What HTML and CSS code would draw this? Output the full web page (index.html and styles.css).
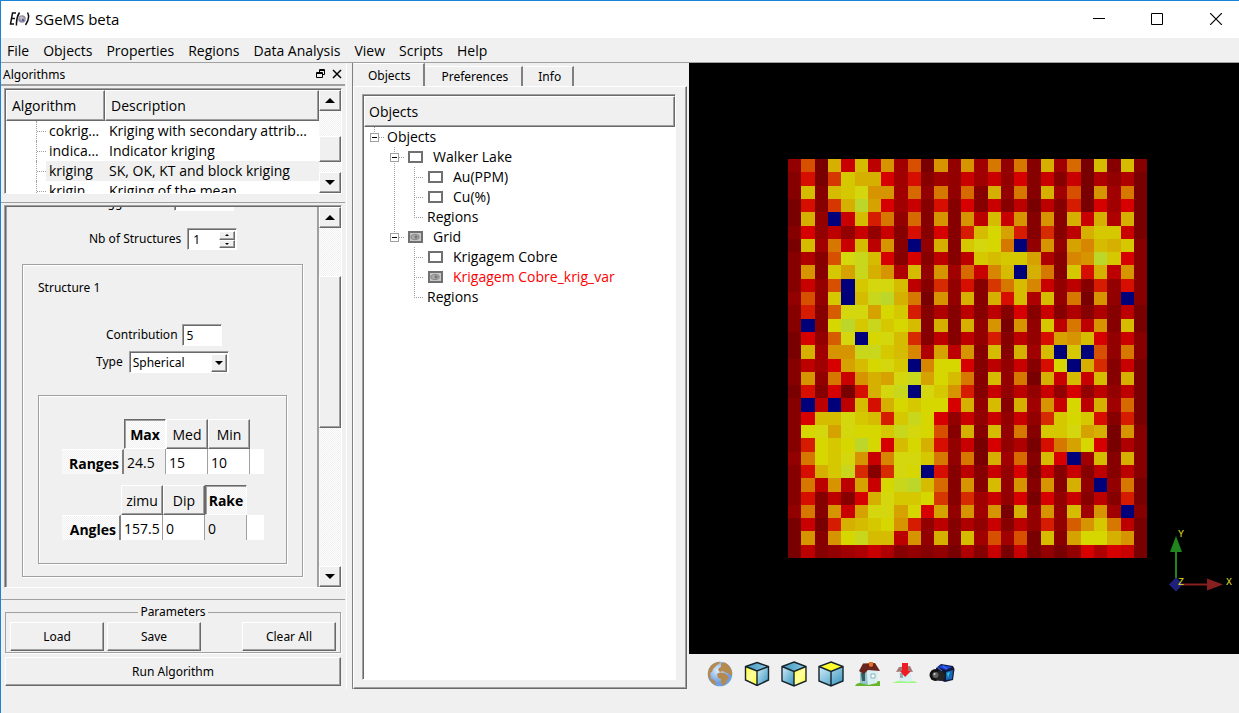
FILE: index.html
```html
<!DOCTYPE html>
<html lang="en">
<head>
<meta charset="utf-8">
<title>SGeMS beta</title>
<link rel="stylesheet" href="styles.css">
</head>
<body>
<div class="window">
  <header class="titlebar">
    <svg class="logo" width="22" height="16" viewBox="0 0 22 16">
      <path d="M7 2H3.500L1.500 13H5M2.500 7.500H6M10.500 1.500Q7 7 7.500 14.500M18.500 1.500Q21.500 7 16.500 14" fill="none" stroke="#111" stroke-width="1.500"/>
      <circle cx="13" cy="8" r="3.800" fill="#8d8ba8"/><path d="M10 7q2-3 4-1t2 3q-3 2-4 0z" fill="#c9b8b0"/><circle cx="14" cy="9" r="1.300" fill="#53639b"/>
    </svg>
    <h1 class="title">SGeMS beta</h1>
    <div class="winbtns">
      <button class="winbtn" aria-label="Minimize"><svg width="12" height="12"><path d="M0 5.500H12" stroke="#000"/></svg></button>
      <button class="winbtn" aria-label="Maximize"><svg width="12" height="12"><path d="M.5.5h11v11H.5z" fill="none" stroke="#000"/></svg></button>
      <button class="winbtn" aria-label="Close"><svg width="12" height="12"><path d="M0 0L12 12M12 0L0 12" stroke="#000" stroke-width="1.200"/></svg></button>
    </div>
  </header>
  <nav class="menubar">
    <button>File</button><button>Objects</button><button>Properties</button><button>Regions</button><button>Data Analysis</button><button>View</button><button>Scripts</button><button>Help</button>
  </nav>

  <main class="main">
    <section class="dock">
      <div class="dock-title">
        <h2>Algorithms</h2>
        <button class="tiny" aria-label="Float"><svg width="10" height="10"><path d="M3.500 3V.5h5v5H7M3 1.500h6M.5 3.500h6v5h-6zM.5 4.500h6" fill="none" stroke="#000"/></svg></button>
        <button class="tiny" aria-label="Close panel"><svg width="10" height="10"><path d="M1 1L9 9M9 1L1 9" stroke="#000" stroke-width="1.500"/></svg></button>
      </div>

      <div class="sunken algos">
        <div class="algo-view">
          <table class="algo-table">
            <thead><tr><th class="c1">Algorithm</th><th>Description</th></tr></thead>
            <tbody>
              <tr><td class="branch"><span>cokriging</span></td><td>Kriging with secondary attributes</td></tr>
              <tr><td class="branch"><span>indicator</span></td><td>Indicator kriging</td></tr>
              <tr class="sel"><td class="branch"><span>kriging</span></td><td>SK, OK, KT and block kriging</td></tr>
              <tr><td class="branch"><span>krigin</span></td><td>Kriging of the mean</td></tr>
            </tbody>
          </table>
        </div>
        <div class="scroll">
          <button class="bevel sbtn" aria-label="Scroll up"><i class="up"></i></button>
          <div class="bevel thumb thumb-a"></div>
          <button class="bevel sbtn" aria-label="Scroll down"><i class="down"></i></button>
        </div>
      </div>

      <div class="sunken params">
        <div class="param-view">
          <div class="peek"><label for="nug">Nugget Effect</label><input id="nug" class="field wide" value=""></div>
          <div class="row nb"><label for="nb">Nb of Structures</label>
            <span class="spin"><input id="nb" value="1"><span class="arrows"><button class="bevel" aria-label="Increase"><i class="up"></i></button><button class="bevel" aria-label="Decrease"><i class="down"></i></button></span></span>
          </div>
          <div class="etched structure">
            <h3>Structure 1</h3>
            <div class="row contrib"><label for="con">Contribution</label><input id="con" class="field" value="5"></div>
            <div class="row type"><label for="typ">Type</label>
              <span class="combo"><select id="typ"><option>Spherical</option></select><span class="bevel combo-arrow"><i class="down"></i></span></span></div>
            <div class="etched aniso">
              <table class="cells ranges">
                <colgroup><col class="rh"><col class="cc"><col class="cc"><col class="cc"><col></colgroup>
                <thead><tr><td></td><th class="on">Max</th><th>Med</th><th>Min</th><td></td></tr></thead>
                <tbody><tr><th class="side">Ranges</th><td class="gray"><input aria-label="Max range" value="24.5"></td><td><input aria-label="Med range" value="15"></td><td><input aria-label="Min range" value="10"></td><td></td></tr></tbody>
              </table>
              <table class="cells angles">
                <colgroup><col class="rh"><col class="cc"><col class="cc"><col class="cc"><col></colgroup>
                <thead><tr><td></td><th title="Azimuth">zimu</th><th>Dip</th><th class="on">Rake</th><td></td></tr></thead>
                <tbody><tr><th class="side">Angles</th><td><input aria-label="Azimuth" value="157.5"></td><td><input aria-label="Dip" value="0"></td><td class="gray"><input aria-label="Rake" value="0"></td><td></td></tr></tbody>
              </table>
            </div>
          </div>
        </div>
        <div class="scroll">
          <button class="bevel sbtn" aria-label="Scroll up"><i class="up"></i></button>
          <div class="bevel thumb thumb-b"></div>
          <button class="bevel sbtn" aria-label="Scroll down"><i class="down"></i></button>
        </div>
      </div>

      <div class="actions">
        <fieldset class="group"><legend>Parameters</legend>
          <div class="btnrow"><button class="bevel btn">Load</button><button class="bevel btn">Save</button><button class="bevel btn clear">Clear All</button></div>
        </fieldset>
        <button class="bevel btn run">Run Algorithm</button>
      </div>
    </section>

    <section class="objects">
      <div class="tabs" role="tablist"><button class="tab active" role="tab">Objects</button><button class="tab" role="tab">Preferences</button><button class="tab" role="tab">Info</button></div>
      <div class="page">
        <div class="sunken treebox">
          <div class="tree-head">Objects</div>
          <ul class="tree">
            <li class="root"><div class="node"><button class="exp" aria-label="Collapse Objects"></button><span class="stub"></span><span class="name">Objects</span></div>
              <ul>
                <li><div class="node"><button class="exp" aria-label="Collapse Walker Lake"></button><span class="stub"></span><input type="checkbox" id="wl"><label for="wl">Walker Lake</label></div>
                  <ul>
                    <li class="leaf"><div class="node"><input type="checkbox" id="au"><label for="au">Au(PPM)</label></div></li>
                    <li class="leaf"><div class="node"><input type="checkbox" id="cu"><label for="cu">Cu(%)</label></div></li>
                    <li class="leaf end"><div class="node"><span>Regions</span></div></li>
                  </ul></li>
                <li class="end"><div class="node"><button class="exp" aria-label="Collapse Grid"></button><span class="stub"></span><input type="checkbox" id="gr" checked><label for="gr">Grid</label></div>
                  <ul>
                    <li class="leaf"><div class="node"><input type="checkbox" id="kc"><label for="kc">Krigagem Cobre</label></div></li>
                    <li class="leaf"><div class="node"><input type="checkbox" id="kv" checked><label for="kv" class="red">Krigagem Cobre_krig_var</label></div></li>
                    <li class="leaf end"><div class="node"><span>Regions</span></div></li>
                  </ul></li>
              </ul></li>
          </ul>
        </div>
      </div>
    </section>

    <section class="view">
      <svg class="scene" viewBox="0 0 550 591" preserveAspectRatio="xMidYMid meet">
        <g id="cells" shape-rendering="crispEdges"></g>
        <path d="M487 520V488" stroke="#1f861f" stroke-width="2"/><path d="M487 473L493 489H481z" fill="#1f861f"/>
        <path d="M490 521.500H520" stroke="#862020" stroke-width="2"/><path d="M518 515.500L534 521.500L518 527.500z" fill="#862020"/>
        <path d="M487 514.500L494 521.500L487 528.500L480 521.500z" fill="#20207c"/>
        <text class="axis" x="489" y="474">Y</text><text class="axis" x="537" y="522">X</text><text class="axis" x="489" y="522">Z</text>
      </svg>
      <div class="toolbar">
        <button aria-label="Reset view"><svg width="26" height="26" viewBox="0 0 26 26">
          <defs><radialGradient id="sea" cx=".4" cy=".35"><stop offset="0" stop-color="#dcecff"/><stop offset="1" stop-color="#6f9fe0"/></radialGradient></defs>
          <circle cx="13" cy="13" r="12.300" fill="url(#sea)"/>
          <path d="M4 4.500Q8 .7 13 .7L12 3L10 4L8 6L6 8L5 11L3 12L4 16L2 18Q-1 10 4 4.500zM14 2L18 1.500Q24 5 25.300 12L24 15L21 12L18 11.500L16 10L13 11L11 9L12 7L14 6zM10 13L13 11.500L17 12L20 14L22 17L20 19L19 22L16 24.500L14 22L14 18L11 17zM2 17L5 18L8 20L9 24.600Q3.500 22 2 17z" fill="#b48a4e"/></svg></button>
        <button aria-label="View along X"><svg width="26" height="26" viewBox="0 0 26 26"><path d="M13 1.500L24.500 5.500L13 10L1.500 5.500z" fill="url(#bt)"/><path d="M1.500 5.500L13 10V24.500L1.500 19z" fill="url(#ye)"/><path d="M24.500 5.500L13 10V24.500L24.500 19z" fill="url(#bl)"/><path class="cube" d="M13 1.500L24.500 5.500V19L13 24.500L1.500 19V5.500zM1.500 5.500L13 10L24.500 5.500M13 10V24.500"/>
          <defs><linearGradient id="bt"><stop offset="0" stop-color="#3d94bd"/><stop offset="1" stop-color="#8cc9e2"/></linearGradient><linearGradient id="bl" x2="1" y2="1"><stop offset="0" stop-color="#d4edf7"/><stop offset="1" stop-color="#3293bf"/></linearGradient><linearGradient id="ye" x2="1" y2="1"><stop offset="0" stop-color="#ffff30"/><stop offset=".5" stop-color="#ffffa0"/><stop offset="1" stop-color="#ffff20"/></linearGradient></defs></svg></button>
        <button aria-label="View along Y"><svg width="26" height="26" viewBox="0 0 26 26"><path d="M13 1L25 5.500L13 10.500L1 5.500z" fill="url(#bt)"/><path d="M1 5.500L13 10.500V25L1 20z" fill="url(#bl)"/><path d="M25 5.500L13 10.500V25L25 20z" fill="url(#ye)"/><path class="cube" d="M13 1L25 5.500V20L13 25L1 20V5.500zM1 5.500L13 10.500L25 5.500M13 10.500V25"/></svg></button>
        <button aria-label="View along Z"><svg width="26" height="26" viewBox="0 0 26 26"><path d="M13 1L25 5.500L13 10.500L1 5.500z" fill="#ffff30"/><path d="M1 5.500L13 10.500V25L1 20zM25 5.500L13 10.500V25L25 20z" fill="url(#bl)"/><path class="cube" d="M13 1L25 5.500V20L13 25L1 20V5.500zM1 5.500L13 10.500L25 5.500M13 10.500V25"/></svg></button>
        <button aria-label="Home view"><svg width="26" height="26" viewBox="0 0 26 26"><path d="M0 25Q2 21 9 22L25 20V25z" fill="#68b52c"/><path d="M5 9L12 10L13 24L5 22z" fill="#91c4cb"/><path d="M12 10L19 5L23 11L22 22L13 24z" fill="#d7eef2"/><path d="M6 12h4v8H7z" fill="#345b62"/><path d="M16 13h4v4h-4z" fill="#fff" stroke="#85b4bd"/><path d="M8 2.500L20 2L25 10L13 9L9 13L4 10z" fill="#69241d"/><path d="M14 1h4v4l-2 1-2-1z" fill="#e56f25"/></svg></button>
        <button aria-label="Save view"><svg width="26" height="26" viewBox="0 0 26 26"><path d="M0 22Q10 17 25 21L24 22z" fill="#9dfa81"/><path d="M6 10L18 9L20 18L18 21L7 20z" fill="#d9eef1"/><path d="M8 12h3v5H8z" fill="#91acb0"/><path d="M7 6L18 5L21 11L13 10L4 11z" fill="#a37775"/><path d="M10 2h6v8h3L13 16L8 10h2z" fill="#ed1c24"/></svg></button>
        <button aria-label="Snapshot"><svg width="26" height="26" viewBox="0 0 26 26"><path d="M7 7L12 3L24 5L25.500 8L24 19L16 21L8 18z" fill="#11183a"/><path d="M9 6L13 4L23 6L17 9z" fill="#1d46db"/><path d="M17 11L24 9L23 18L17 19z" fill="#1769b8"/><path d="M18 12L21 11L19 17z" fill="#31c6cf"/><path d="M8 6L13 10M14 5L18 8" stroke="#4a7dff"/><circle cx="6.500" cy="14" r="6" fill="#121212"/><circle cx="11" cy="15" r="5" fill="#252525"/><circle cx="6.500" cy="14" r="3" fill="#626262"/><circle cx="5.500" cy="13" r="1" fill="#d0d0d0"/></svg></button>
      </div>
    </section>
  </main>
</div>
<script src="grid.js"></script>
</body>
</html>
```
FILE: styles.css
```css
* { box-sizing: border-box; }
body { margin: 0; background: #f0f0f0; color: #000; font: 12px/16px "Noto Sans", "Open Sans", sans-serif; }
button, input, select { font: inherit; color: inherit; margin: 0; padding: 0; border: 0; border-radius: 0; background: none; }
h1, h2, h3 { margin: 0; font-size: inherit; font-weight: normal; }
svg { display: block; }
ul { list-style: none; margin: 0; padding: 0; }

.window { display: flex; flex-direction: column; min-height: 100vh; border-top: 1px solid #1883d7; border-left: 1px solid #1883d7; }
.titlebar { display: flex; align-items: center; height: 37px; background: #fff; padding: 0 0 2px 8px; }
.title { flex: 1; margin-left: 4px; font: 15px/20px "Open Sans", sans-serif; }
.winbtns { display: flex; }
.winbtn { width: 58px; height: 34px; display: flex; align-items: center; justify-content: center; }
.winbtn:last-child { width: 53px; padding-left: 7px; }
.menubar { display: flex; gap: 14px; height: 25px; padding-left: 6px; border-bottom: 1px solid #a0a0a0; font: 14px/26px "Open Sans", sans-serif; }
.menubar button { white-space: nowrap; }

.main { flex: 1; display: flex; min-height: 0; }
.dock { flex: 0 0 346px; display: flex; flex-direction: column; margin-bottom: 24px; border-right: 1px solid #fff; }
.dock-title { display: flex; align-items: center; height: 23px; padding: 2px 0 0 2px; margin-right: 1px; border-bottom: 2px solid #a0a0a0; }
.dock-title h2 { flex: 1; }
.tiny { width: 16px; height: 16px; padding: 2px 3px 4px; }

.sunken { border: 1px solid; border-color: #a0a0a0 #fff #fff #a0a0a0; box-shadow: inset 1px 1px #696969; padding: 1px 0 0 1px; }
.bevel { background: #f0f0f0; border: 1px solid; border-color: #fff #696969 #696969 #fff; box-shadow: inset -1px -1px #a0a0a0; }
.etched { border: 1px solid #a0a0a0; box-shadow: 1px 1px #fff, inset 1px 1px #fff; }
.up, .down { display: block; border: 5px solid transparent; border-top-width: 0; border-bottom: 5px solid #000; }
.down { transform: rotate(180deg); }

.algos { display: flex; height: 106px; margin: 2px 4px 0 3px; background: #fff; }
.algo-view { flex: 1; min-width: 0; height: 103px; overflow: hidden; }
.algo-table { width: 100%; table-layout: fixed; border-collapse: separate; border-spacing: 0; font: 14px/20px "Open Sans", sans-serif; }
.algo-table th { height: 31px; padding: 0 5px; text-align: left; font-weight: normal; background: #f0f0f0; border: 1px solid; border-color: #fff #696969 #696969 #fff; box-shadow: inset -1px -1px #a0a0a0; }
.algo-table .c1 { width: 99px; }
.algo-table td { height: 20px; padding: 0 8px 0 4px; white-space: nowrap; overflow: hidden; text-overflow: ellipsis; }
.algo-table .branch { padding: 0 0 0 30px; background: linear-gradient(#fff, #fff) 0 0 / 40px 100% no-repeat; }
.branch span { display: block; padding: 0 5px 0 12px; overflow: hidden; text-overflow: ellipsis; border-left: 1px dotted #a0a0a0; background: repeating-linear-gradient(90deg, #a0a0a0 0 1px, transparent 1px 2px) 0 10px / 10px 1px no-repeat; }
.algo-table .sel td { background-color: #f0f0f0; }

.scroll { flex: 0 0 22px; display: flex; flex-direction: column; justify-content: space-between; background: repeating-conic-gradient(#fff 0 25%, #f0f0f0 0 50%) 0 0 / 2px 2px; }
.sbtn { height: 21px; display: flex; align-items: center; justify-content: center; flex-shrink: 0; }
.thumb-a { height: 26px; margin-top: 15px; }
.thumb-b { height: 152px; margin-bottom: 91px; }

.params { position: relative; flex: 1; display: flex; min-height: 383px; margin: 11px 4px 11px 3px; }
.params::before { content: ""; position: absolute; inset: -4px -4px auto -4px; border-top: 1px solid #a0a0a0; }
.param-view { flex: 1; min-width: 0; overflow: hidden; border: solid #a0a0a0; border-width: 0 2px 0 1px; padding: 0 14px 0 15px; }
.peek, .row { display: flex; align-items: center; gap: 6px; }
.peek { height: 4px; overflow: hidden; align-items: flex-end; padding-left: 69px; }
.peek label { line-height: 16px; white-space: nowrap; }
.field { width: 40px; height: 22px; padding-left: 4px; background: #fff; border: 1px solid; border-color: #a0a0a0 #fff #fff #a0a0a0; box-shadow: inset 1px 1px #696969; }
.wide { width: 60px; }
.nb { margin-top: 17px; padding-left: 67px; }
.nb label, .contrib label, .type label { white-space: nowrap; }
.spin, .combo { display: flex; position: relative; background: #fff; border: 1px solid; border-color: #a0a0a0 #fff #fff #a0a0a0; box-shadow: inset 1px 1px #696969; height: 22px; padding: 2px 1px 1px 2px; }
.spin input { width: 29px; padding-left: 3px; }
.arrows { display: flex; flex-direction: column; }
.arrows button { width: 16px; height: 9px; display: flex; align-items: center; justify-content: center; }
.arrows i { border-left-width: 2px; border-right-width: 2px; border-bottom-width: 2px; }
.structure { margin-top: 14px; padding: 15px; height: 313px; }
.contrib { margin-top: 28px; padding-left: 68px; gap: 4px; }
.type { margin-top: 5px; padding-left: 58px; }
.combo { width: 100px; }
.combo select { width: 100%; appearance: none; padding-left: 1px; }
.combo-arrow { position: absolute; right: 1px; top: 2px; width: 16px; height: 18px; display: flex; align-items: center; justify-content: center; pointer-events: none; }
.combo-arrow i { border-left-width: 4px; border-right-width: 4px; border-bottom-width: 4px; }
.aniso { margin-top: 22px; height: 169px; padding: 23px 22px 0 23px; }

.cells { width: 100%; table-layout: fixed; border-collapse: separate; border-spacing: 0; font: 14px/20px "Open Sans", sans-serif; }
.cells .cc { width: 42px; }
.ranges .rh { width: 62px; }
.angles .rh { width: 59px; }
.angles { margin-top: 11px; }
.cells th, .cells td { padding: 0; height: 25px; }
.cells thead th { height: 30px; padding-top: 1px; font-weight: normal; border: 1px solid; border-color: #fff #696969 #696969 #fff; box-shadow: inset -1px -1px #a0a0a0; }
.cells thead .on { font-weight: bold; border-color: #696969 #fff #fff #696969; box-shadow: inset 1px 1px #a0a0a0; background: repeating-conic-gradient(#fff 0 25%, #f0f0f0 0 50%) 0 0 / 2px 2px; }
.cells tbody td { background: #fff; border-right: 1px solid #a0a0a0; }
.cells tbody td:last-child { border: 0; }
.cells tbody .gray { background: #f0f0f0; }
.cells tbody .side { font-weight: bold; text-align: right; padding: 3px 3px 0 0; border-right: 2px solid #808080; border-top: 1px solid #fff; background: repeating-conic-gradient(#fff 0 25%, #f0f0f0 0 50%) 0 0 / 2px 2px; }
.cells input { display: block; width: 100%; padding: 2px 0 0 3px; }

.actions { border-top: 1px solid #a0a0a0; margin-right: 1px; padding: 4px 4px 3px 4px; }
.group { margin: 0; padding: 0 4px 1px 4px; border: 1px solid #a0a0a0; box-shadow: 1px 1px #fff; min-width: 0; }
.group legend { margin: 0 auto; padding: 0 2px; }
.btnrow { display: flex; gap: 3px; padding-top: 2px; }
.btn { height: 29px; }
.btnrow .btn { width: 94px; }
.btnrow .clear { margin-left: auto; }
.run { display: block; width: 100%; margin-top: 4px; }

.objects { flex: 0 0 335px; display: flex; flex-direction: column; margin: 0 2px 24px 5px; border-left: 1px solid #808080; }
.tabs { display: flex; align-items: flex-end; height: 23px; }
.tab { height: 20px; padding: 0 13px 0 16px; border-right: 2px solid #808080; border-top: 1px solid #fff; }
.tab.active { height: 23px; padding: 2px 13px 0 15px; }
.tab:last-child { padding: 0 11px 0 15px; }
.page { flex: 1; display: flex; border: 1px solid; border-color: #fff #696969 #696969 #fff; box-shadow: inset -1px -1px #a0a0a0; padding: 7px 10px 8px 8px; }
.treebox { flex: 1; min-width: 0; background: #fff; font: 14px/20px "Open Sans", sans-serif; }
.tree-head { height: 31px; padding: 5px 4px; background: #f0f0f0; border: 1px solid; border-color: #fff #696969 #696969 #fff; box-shadow: inset -1px -1px #a0a0a0; }
.tree { padding: 0 0 0 6px; }
.tree ul { margin-left: 20px; }
.tree li { background: repeating-linear-gradient(#a0a0a0 0 1px, transparent 1px 2px) 4px 0 / 1px 100% no-repeat; }
.tree .end, .tree .root { background-size: 1px 10px; }
.node { display: flex; align-items: center; height: 20px; white-space: nowrap; }
.exp { width: 9px; height: 9px; border: 1px solid #a0a0a0; background: linear-gradient(#000, #000) 1px 3px / 5px 1px no-repeat #fff; }
.stub { width: 5px; height: 1px; background: repeating-linear-gradient(90deg, #a0a0a0 0 1px, transparent 1px 2px); }
.name { margin-left: 3px; }
.leaf .node { padding-left: 17px; background: repeating-linear-gradient(90deg, #a0a0a0 0 1px, transparent 1px 2px) 4px 10px / 10px 1px no-repeat; }
.node input { appearance: none; width: 15px; height: 12px; border: 2px solid #707070; background: #fff; margin: 0 10px 0 4px; }
.leaf .node input { margin-left: 1px; }
.node input:checked { background: radial-gradient(circle at 6px 4px, #777 0 1px, transparent 2px), radial-gradient(ellipse 6px 4px at 5px 4px, #aaa 0 50%, #888 65%, #c8c8c8 90%); }
.red { color: #f00; }

.view { flex: 1; min-width: 0; display: flex; flex-direction: column; }
.scene { flex: 1; min-height: 0; width: 100%; background: #000; }
.axis { fill: #e0e020; font: 10px "Liberation Mono", monospace; }
.toolbar { display: flex; gap: 11px; height: 59px; padding: 7px 0 0 18px; }
.toolbar button { width: 26px; height: 26px; }
.cube { fill: none; stroke: #17232a; stroke-width: 1.4; }
```
FILE: grid.js
```js
const palette = {
  k: '#780000', d: '#860000', e: '#920000', f: '#a00000', g: '#ae0000', h: '#bc0000', r: '#c80000',
  R: '#d60000', s: '#d60e00', t: '#d61c00', u: '#d62a00', v: '#d63600', w: '#d65000', x: '#d65c00',
  y: '#d66a00', z: '#d67800', A: '#d68600', B: '#d69400', C: '#d6a200', D: '#d6b000', E: '#d6bc00',
  F: '#d6c800', G: '#d6d600', H: '#d4d60e', I: '#c8d61c', J: '#bcd62a', N: '#00007a'
};
const rows = [
  'ewkDrEhBfwkBeBfzezdDfykEdEd', 'dskvFDDRfsdferfreRdrdrkgegk', 'dEdEFHBBfyezeydDezdDfwkBfzk',
  'ksdvDJCRfrdsdRdrdhkhdtkRfRk', 'kDeNrEtzeydBdBhErBdBdDrDgDk', 'dRehererdsdRdtEGCtdudhDFFrk',
  'kEfzrEhBdNeDdFHGzNeBeCAEDFd', 'dgdwHIERdRdhdhFEFFCgdABJFRd', 'dBdFCIDBgEeBfyrAENDzdFsDhBd',
  'drewNFHHEhduesdvzEArehdtesd', 'eweFNEIJDzkBeDdDsEgEezkBeNd', 'dtdxHHCGFtdgdhdhdRdrdgdgdhk',
  'dNdGJFIFGEdDdDeBkBeFhzhBdEk', 'kRexHNGHEudhdhetdhesCBERerd', 'kDfBBIIFEAgChBdEdDfENFNwezd',
  'dhfRCEGHFNAGGRdherdsGNDudrk', 'dBezrBDCHICGEzdEezkDrErEdDk', 'ksdRksDHINHFBtdrehereRehehk',
  'dNhNhEsDGFGGRDeEdDfBrGhDfyk', 'dREEHFEtFIGRererereuFGFsdtk', 'dGHCHGGFIHGwdDdEezdFFHCDkBd',
  'dtGFGJGREGDserkRegkszCGRkgd', 'ezGFHBrAHHFzezkDfydERNfEdDd', 'dsDFIuduHGNsdhdreRkrdrdhdhd',
  'dzhBhCrGIJEydBdEeBdBdDeNezk', 'dsdhdRDHFFGvdufreRkRerdhdtk', 'ezdBrCHHCGRCeBfBkDeBeEfBfNd',
  'krktDEFGBtehdgerdhetexBFzhk', 'kBdBGIEEhBeDdEfwfwkEdCGGDBk', 'khdefgrgdedekgdrkrkekeRgRrk'
];
const group = document.getElementById('cells');
const size = 399 / 30;
rows.forEach((row, j) => [...row].forEach((code, i) => {
  const x = Math.round(99 + i * size), y = Math.round(96 + j * size);
  const rect = document.createElementNS('http://www.w3.org/2000/svg', 'rect');
  rect.setAttribute('x', x);
  rect.setAttribute('y', y);
  rect.setAttribute('width', Math.round(99 + (i + 1) * size) - x);
  rect.setAttribute('height', Math.round(96 + (j + 1) * size) - y);
  rect.setAttribute('fill', palette[code]);
  group.append(rect);
}));
```
